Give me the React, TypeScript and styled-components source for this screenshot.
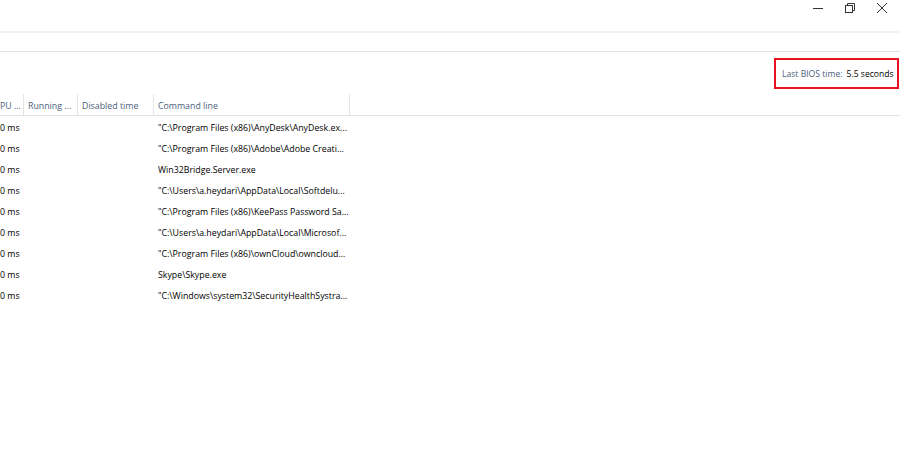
import React from 'react';
import styled, { createGlobalStyle } from 'styled-components';

const GlobalStyle = createGlobalStyle`
  html, body {
    margin: 0;
    padding: 0;
    background: #ffffff;
  }
  body {
    font-family: "Open Sans", "Noto Sans", sans-serif;
    overflow: hidden;
  }
`;

const Window = styled.div`
  width: 900px;
  height: 458px;
  background: #ffffff;
  display: flex;
  flex-direction: column;
  overflow: hidden;
`;

const TitleBar = styled.div`
  height: 31px;
  display: flex;
  justify-content: flex-end;
  align-items: flex-start;
  padding-right: 2px;
  border-bottom: 2px solid #f2f2f2;
`;

const ControlButton = styled.div`
  width: 32px;
  height: 16px;
  display: flex;
  align-items: center;
  justify-content: center;
  color: #333;
`;

const TabStrip = styled.div`
  height: 18px;
  border-bottom: 1px solid #e3e3e3;
`;

const InfoRow = styled.div`
  height: 42px;
  display: flex;
  justify-content: flex-end;
  align-items: flex-start;
  padding: 6px 1px 0 0;
  box-sizing: border-box;
`;

const BiosBox = styled.div`
  width: 125px;
  height: 31px;
  box-sizing: border-box;
  border: 2px solid #e81123;
  display: flex;
  align-items: center;
  gap: 4px;
  padding-left: 6px;
  font-size: 8.6px;
  white-space: nowrap;
`;

const BiosLabel = styled.span`
  color: #4c607a;
`;

const BiosValue = styled.span`
  color: #000;
`;

const Table = styled.div`
  display: flex;
  flex-direction: column;
  font-size: 8.8px;
`;

const HeaderRow = styled.div`
  display: flex;
  height: 21px;
  border-bottom: 1px solid #e5e5e5;
`;

const HeaderCell = styled.div<{ w: number; first?: boolean }>`
  width: ${(p) => p.w}px;
  box-sizing: border-box;
  padding: 3px 0 0 ${(p) => (p.first ? 0 : 4)}px;
  border-right: 1px solid #e5e5e5;
  display: flex;
  align-items: center;
  color: #4c607a;
  white-space: nowrap;
  overflow: hidden;
`;

const Row = styled.div`
  display: flex;
  height: 21px;
  box-sizing: border-box;
  align-items: center;
  padding-top: 2px;
`;

const Cell = styled.div<{ w: number; first?: boolean }>`
  width: ${(p) => p.w}px;
  box-sizing: border-box;
  padding-left: ${(p) => (p.first ? 0 : 4)}px;
  color: #000;
  white-space: nowrap;
  overflow: hidden;
`;

const columns = [
  { label: 'PU ...', w: 24 },
  { label: 'Running ...', w: 54 },
  { label: 'Disabled time', w: 76 },
  { label: 'Command line', w: 196 },
];

const rows = [
  '"C:\\Program Files (x86)\\AnyDesk\\AnyDesk.ex...',
  '"C:\\Program Files (x86)\\Adobe\\Adobe Creati...',
  'Win32Bridge.Server.exe',
  '"C:\\Users\\a.heydari\\AppData\\Local\\Softdelu...',
  '"C:\\Program Files (x86)\\KeePass Password Sa...',
  '"C:\\Users\\a.heydari\\AppData\\Local\\Microsof...',
  '"C:\\Program Files (x86)\\ownCloud\\owncloud...',
  'Skype\\Skype.exe',
  '"C:\\Windows\\system32\\SecurityHealthSystra...',
];

export default function App() {
  return (
    <>
      <GlobalStyle />
      <Window>
        <TitleBar>
          <ControlButton>
            <svg width="10" height="10" viewBox="0 0 10 10">
              <line x1="0" y1="5.5" x2="10" y2="5.5" stroke="#333" strokeWidth="1" />
            </svg>
          </ControlButton>
          <ControlButton>
            <svg width="10" height="10" viewBox="0 0 10 10" fill="none" stroke="#333" strokeWidth="1">
              <rect x="0.5" y="2.5" width="7" height="7" />
              <polyline points="2.5,2.5 2.5,0.5 9.5,0.5 9.5,7.5 7.5,7.5" />
            </svg>
          </ControlButton>
          <ControlButton>
            <svg width="10" height="10" viewBox="0 0 10 10" stroke="#333" strokeWidth="1">
              <line x1="0" y1="0" x2="10" y2="10" />
              <line x1="10" y1="0" x2="0" y2="10" />
            </svg>
          </ControlButton>
        </TitleBar>
        <TabStrip />
        <InfoRow>
          <BiosBox>
            <BiosLabel>Last BIOS time:</BiosLabel>
            <BiosValue>5.5 seconds</BiosValue>
          </BiosBox>
        </InfoRow>
        <Table>
          <HeaderRow>
            {columns.map((c, i) => (
              <HeaderCell key={c.label} w={c.w} first={i === 0}>
                {c.label}
              </HeaderCell>
            ))}
          </HeaderRow>
          {rows.map((cmd) => (
            <Row key={cmd}>
              <Cell w={24} first>
                0 ms
              </Cell>
              <Cell w={54} />
              <Cell w={76} />
              <Cell w={196}>{cmd}</Cell>
            </Row>
          ))}
        </Table>
      </Window>
    </>
  );
}
